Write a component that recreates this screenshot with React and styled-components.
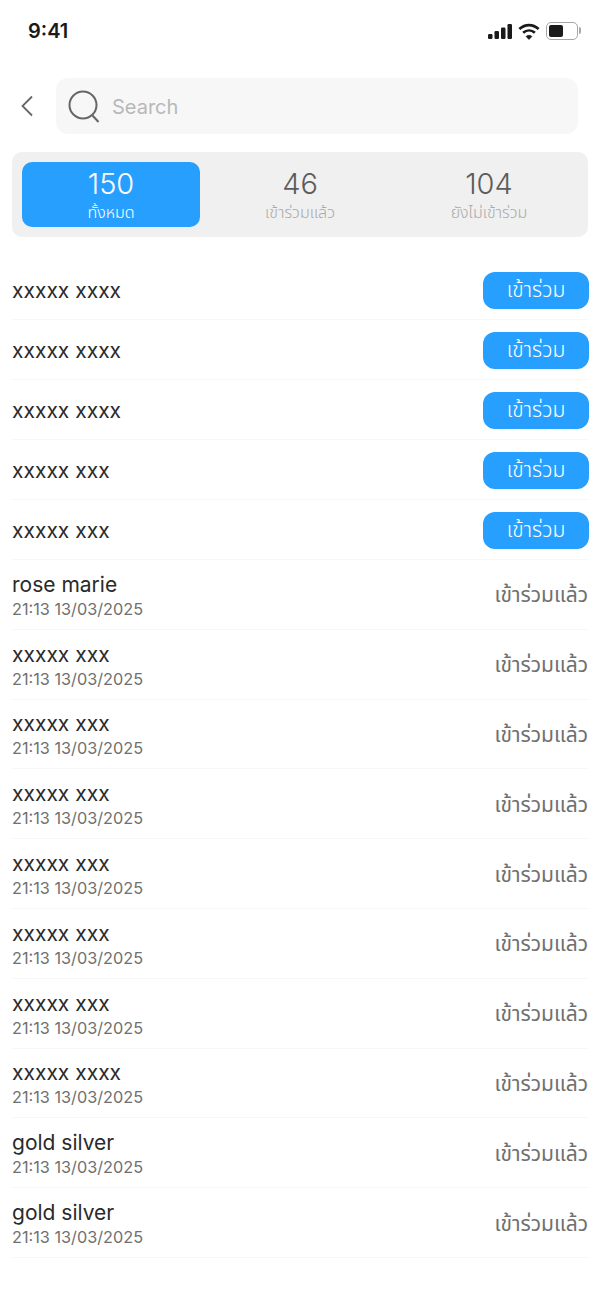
import React from "react";
import styled, { createGlobalStyle } from "styled-components";

const pending = ["xxxxx xxxx", "xxxxx xxxx", "xxxxx xxxx", "xxxxx xxx", "xxxxx xxx"];
const joined = [
  "rose marie",
  "xxxxx xxx",
  "xxxxx xxx",
  "xxxxx xxx",
  "xxxxx xxx",
  "xxxxx xxx",
  "xxxxx xxx",
  "xxxxx xxxx",
  "gold silver",
  "gold silver",
];
const tabs = [
  { count: 150, label: "ทั้งหมด", active: true },
  { count: 46, label: "เข้าร่วมแล้ว" },
  { count: 104, label: "ยังไม่เข้าร่วม" },
];

const App = () => {
  return (
    <Page>
      <GlobalStyle />
      <StatusBar>
        <Clock>9:41</Clock>
        <StatusIcons>
          <svg width="24" height="15" viewBox="0 0 24 15" fill="#1a1a1a">
            <rect x="0" y="10" width="4.5" height="5" rx="1.2" />
            <rect x="6.5" y="7" width="4.5" height="8" rx="1.2" />
            <rect x="13" y="3.5" width="4.5" height="11.5" rx="1.2" />
            <rect x="19.5" y="0" width="4.5" height="15" rx="1.2" />
          </svg>
          <svg width="22" height="17" viewBox="0 0 21 16" fill="none" stroke="#1a1a1a" strokeWidth="2.6">
            <path d="M1.3 5.6C6.8 .6 14.2 .6 19.7 5.6" />
            <path d="M4.9 9.3c3.3-3 7.9-3 11.2 0" />
            <path d="M10.5 15.6 7.7 12.7c1.7-1.4 3.9-1.4 5.6 0z" fill="#1a1a1a" strokeWidth="0.6" />
          </svg>
          <Battery>
            <BatteryFill />
            <BatteryCap />
          </Battery>
        </StatusIcons>
      </StatusBar>

      <SearchRow>
        <BackButton>
          <svg width="14" height="22" viewBox="0 0 14 22" fill="none" stroke="#666" strokeWidth="1.8">
            <path d="M12 1.5 2.5 11l9.5 9.5" />
          </svg>
        </BackButton>
        <SearchBox>
          <svg width="32" height="34" viewBox="0 0 32 34" fill="none" stroke="#666" strokeWidth="2">
            <circle cx="15" cy="15" r="13.5" />
            <path d="M24.5 25.5 30.5 32" />
          </svg>
          <Placeholder>Search</Placeholder>
        </SearchBox>
      </SearchRow>

      <TabBar>
        {tabs.map((tab) => (
          <Tab key={tab.count} $active={tab.active}>
            <TabCount>{tab.count}</TabCount>
            <TabLabel $active={tab.active}>{tab.label}</TabLabel>
          </Tab>
        ))}
      </TabBar>

      <List>
        {pending.map((name, index) => (
          <PendingRow key={index}>
            <Name>{name}</Name>
            <JoinButton>เข้าร่วม</JoinButton>
          </PendingRow>
        ))}
        {joined.map((name, index) => (
          <JoinedRow key={index}>
            <Info>
              <Name>{name}</Name>
              <DateText>21:13 13/03/2025</DateText>
            </Info>
            <JoinedText>เข้าร่วมแล้ว</JoinedText>
          </JoinedRow>
        ))}
      </List>
    </Page>
  );
};

export default App;

const GlobalStyle = createGlobalStyle`
  body {
    margin: 0;
    background: #fff;
    font-family: Inter, "Noto Sans", "Noto Sans Thai", "Liberation Sans", sans-serif;
  }
`;

const Page = styled.div`
  width: 600px;
  height: 1300px;
  overflow: hidden;
  background: #fff;
`;

const StatusBar = styled.div`
  height: 62px;
  box-sizing: border-box;
  padding: 0 20px 0 28px;
  display: flex;
  justify-content: space-between;
  align-items: center;
`;

const Clock = styled.div`
  font-size: 20px;
  font-weight: 600;
  color: #1a1a1a;
`;

const StatusIcons = styled.div`
  display: flex;
  align-items: center;
  gap: 6px;
`;

const Battery = styled.div`
  position: relative;
  width: 32px;
  height: 18px;
  box-sizing: border-box;
  border: 1.5px solid #a6a6a6;
  border-radius: 5px;
  padding: 2px;
  margin-right: 2px;
`;

const BatteryFill = styled.div`
  width: 14px;
  height: 100%;
  background: #1a1a1a;
  border-radius: 2px;
`;

const BatteryCap = styled.div`
  position: absolute;
  right: -4px;
  top: 4px;
  width: 2px;
  height: 7px;
  background: #a6a6a6;
  border-radius: 0 2px 2px 0;
`;

const SearchRow = styled.div`
  display: flex;
  align-items: center;
  margin-top: 16px;
  padding: 0 22px 0 20px;
`;

const BackButton = styled.div`
  width: 36px;
  display: flex;
  align-items: center;
`;

const SearchBox = styled.div`
  flex: 1;
  height: 56px;
  box-sizing: border-box;
  padding: 2px 12px 0;
  display: flex;
  align-items: center;
  gap: 12px;
  background: #f7f7f7;
  border-radius: 12px;
`;

const Placeholder = styled.div`
  font-size: 20px;
  color: #b8b8b8;
`;

const TabBar = styled.div`
  margin: 18px 12px 0;
  padding: 10px;
  height: 85px;
  box-sizing: border-box;
  display: grid;
  grid-template-columns: 178px 200px 178px;
  background: #f0f0f0;
  border-radius: 10px;
`;

const Tab = styled.div`
  display: flex;
  flex-direction: column;
  align-items: center;
  justify-content: center;
  border-radius: 10px;
  color: ${({ $active }) => ($active ? "#fff" : "#5c5c5c")};
  background: ${({ $active }) => ($active ? "#279fff" : "transparent")};
`;

const TabCount = styled.div`
  font-size: 29px;
  line-height: 34px;
  font-weight: 300;
`;

const TabLabel = styled.div`
  font-size: 16px;
  line-height: 22px;
  font-weight: 300;
  color: ${({ $active }) => ($active ? "#fff" : "#aaa")};
`;

const List = styled.div`
  margin: 23px 11px 0 12px;
`;

const PendingRow = styled.div`
  height: 60px;
  box-sizing: border-box;
  padding-top: 2px;
  display: flex;
  justify-content: space-between;
  align-items: center;
  border-bottom: 1px solid #f7f7f7;
`;

const JoinedRow = styled(PendingRow)`
  height: 69.8px;
  padding: 3px 1px 0 0;
`;

const Info = styled.div`
  display: flex;
  flex-direction: column;
  gap: 2px;
`;

const Name = styled.div`
  font-size: 21px;
  line-height: 24px;
  color: #2a2a2a;
`;

const DateText = styled.div`
  font-size: 16.25px;
  line-height: 20px;
  color: #707070;
`;

const JoinButton = styled.div`
  width: 106px;
  height: 37.5px;
  display: flex;
  align-items: center;
  justify-content: center;
  background: #279fff;
  border-radius: 12px;
  color: #fff;
  font-size: 21px;
  font-weight: 300;
`;

const JoinedText = styled.div`
  font-size: 21px;
  color: #707070;
`;
